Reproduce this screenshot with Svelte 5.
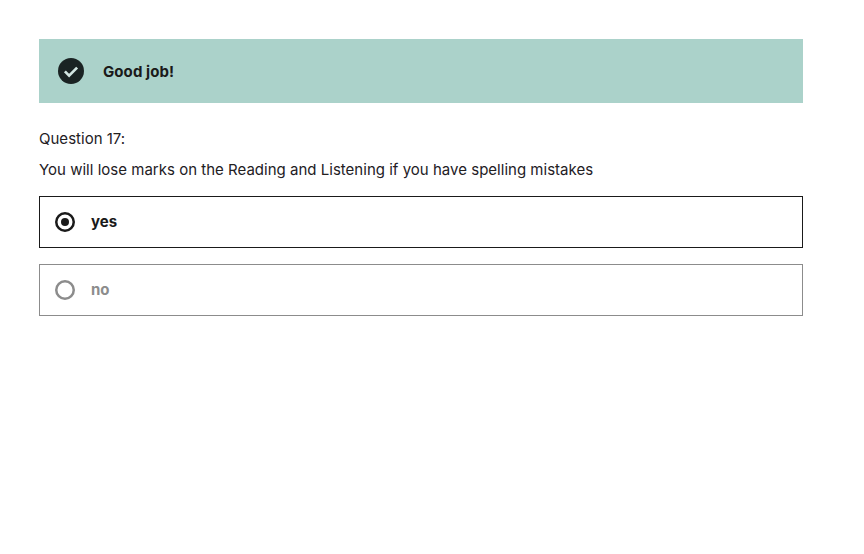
<script>
  const options = [
    { label: 'yes', selected: true },
    { label: 'no', selected: false }
  ];
</script>

<main class="page">
  <div class="banner">
    <svg class="tick" width="26" height="26" viewBox="0 0 26 26" aria-hidden="true">
      <circle cx="13" cy="13" r="13" fill="#1a2323" />
      <path d="M6.9 13.4l4.2 4.2 8-8" fill="none" stroke="#d3e6e2" stroke-width="2.7" />
    </svg>
    <strong>Good job!</strong>
  </div>

  <p class="number">Question 17:</p>
  <p class="prompt">You will lose marks on the Reading and Listening if you have spelling mistakes</p>

  <div class="options">
    {#each options as option}
      <div class="option" class:selected={option.selected}>
        <svg class="radio" width="20" height="20" viewBox="0 0 20 20" aria-hidden="true">
          <circle cx="10" cy="10" r="8.75" fill="none" stroke="currentColor" stroke-width="2.5" />
          {#if option.selected}
            <circle cx="10" cy="10" r="4" fill="currentColor" />
          {/if}
        </svg>
        <span class="label">{option.label}</span>
      </div>
    {/each}
  </div>
</main>

<style>
  :global(body) {
    background: #fff;
    color: #23201f;
    font-family: Inter, "Liberation Sans", sans-serif;
  }

  .page {
    padding: 39px 61px 0 39px;
  }

  .banner {
    display: flex;
    align-items: center;
    gap: 19px;
    height: 64px;
    padding-left: 19px;
    background: #abd2ca;
    font-size: 15px;
    color: #1a1a1a;
  }

  .banner strong {
    letter-spacing: 0.08px;
  }

  .number,
  .prompt {
    margin: 0;
    font-size: 15px;
    line-height: 20px;
    letter-spacing: 0.015px;
  }

  .number {
    margin-top: 26px;
  }

  .prompt {
    margin-top: 11px;
  }

  .options {
    display: flex;
    flex-direction: column;
    gap: 16px;
    margin-top: 16px;
  }

  .option {
    display: flex;
    align-items: center;
    gap: 16px;
    box-sizing: border-box;
    height: 52px;
    padding-left: 15px;
    border: 1px solid #8c8c8c;
    color: #8c8c8c;
    font-size: 15px;
    font-weight: 700;
  }

  .option.selected {
    border-color: #1a1a1a;
    color: #1a1a1a;
  }

  .label {
    line-height: 20px;
    margin-top: -1px;
  }
</style>
